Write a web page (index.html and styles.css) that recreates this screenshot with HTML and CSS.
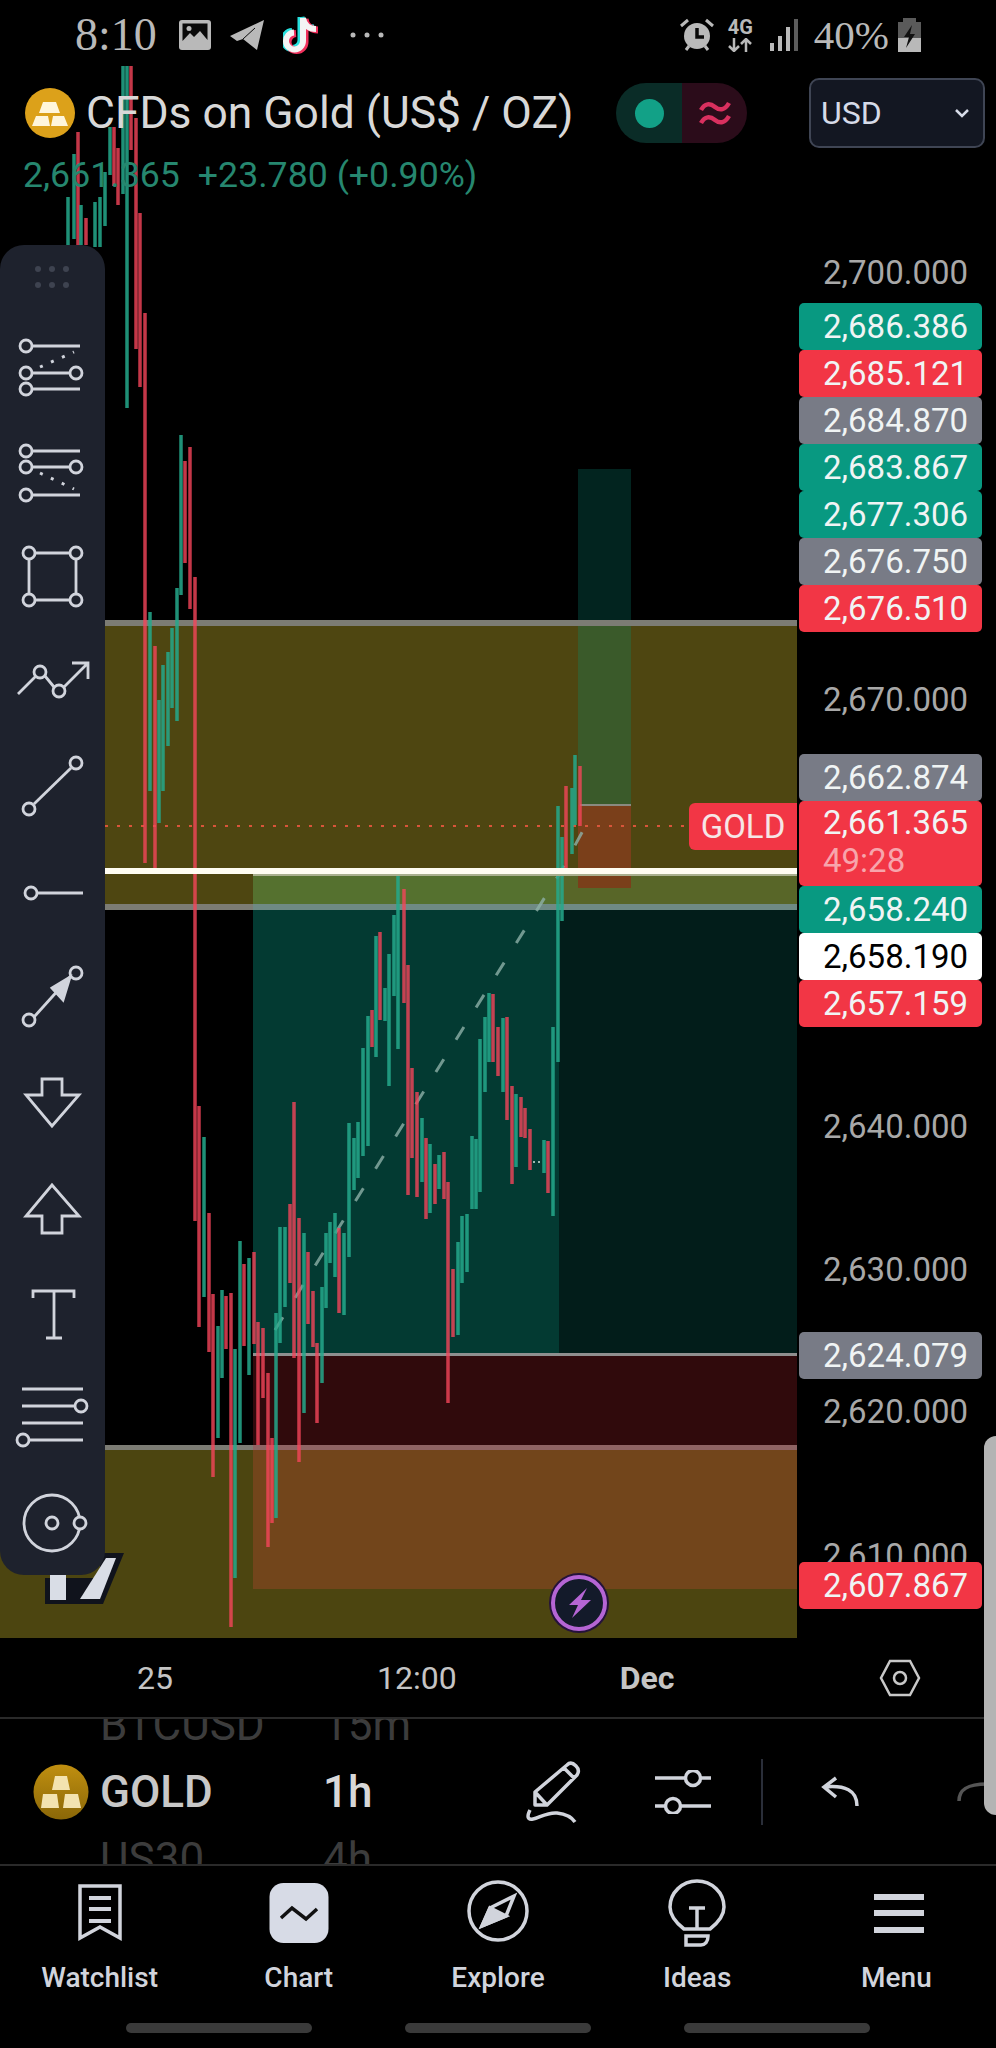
FILE: index.html
```html
<!DOCTYPE html>
<html lang="en">

<head>
    <meta charset="UTF-8">
    <meta name="viewport" content="width=device-width, initial-scale=1.0">
    <title>CFDs on Gold - Chart</title>
    <link rel="stylesheet" href="styles.css">
</head>

<body>
    <div class="screen">

        <section class="chart">
            <!-- plot: zones, drawings and candles, in page pixels -->
            <svg class="plot" width="996" height="1638" viewBox="0 0 996 1638">
                <rect x="0" y="621" width="797" height="288" fill="#4e4611"/>
                <rect x="0" y="1445" width="797" height="193" fill="#4c4510"/>

                <rect x="253" y="904" width="306" height="451" fill="#033a32"/>
                <rect x="559" y="904" width="238" height="451" fill="#021d1a"/>
                <rect x="253" y="874" width="306" height="30" fill="#55712f"/>
                <rect x="559" y="874" width="238" height="30" fill="#586628"/>
                <rect x="253" y="1356" width="544" height="90" fill="#300a0c"/>
                <rect x="253" y="1446" width="544" height="143" fill="#72451b"/>

                <rect x="578" y="469" width="53" height="152" fill="#02241f"/>
                <rect x="578" y="621" width="53" height="184" fill="#3a5a2a"/>
                <rect x="578" y="805" width="53" height="83" fill="#7a3f1a"/>
                <rect x="580" y="804" width="51" height="2" fill="#8a8a80"/>

                <rect x="105" y="620" width="692" height="6" fill="#7c7c74"/>
                <rect x="105" y="904" width="692" height="6" fill="#7c7c74"/>
                <rect x="253" y="904" width="544" height="6" fill="#6f8a84"/>
                <rect x="0" y="1445" width="797" height="5" fill="#7c7c74"/>
                <rect x="253" y="1445" width="544" height="5" fill="#8f6464"/>
                <rect x="253" y="1353" width="544" height="3" fill="#8f8f8f"/>

                <path class="entry-line" d="M105 826H689"/>
                <path class="trend-line" d="M275 1330L560 873L593 812"/>

                <path class="bear" d="M78 132V245M86 218V245M114 127V186M118 148V205M131 66V150M136 118V349M140 213V387M145 313V863M155 646V871M185 461V563M190 447V609M195 577V1221M199 1106V1327M209 1213V1352M213 1294V1477M226 1296V1349M231 1293V1627M244 1264V1346M254 1252V1344M258 1322V1445M263 1328V1398M268 1373V1547M272 1438V1523M290 1204V1283M294 1102V1358M299 1218V1462M308 1252V1324M313 1291V1347M317 1343V1423M339 1228V1313M372 1010V1047M380 932V1020M404 889V1003M408 965V1195M412 1068V1158M417 1092V1197M426 1138V1219M435 1164V1204M444 1152V1199M448 1182V1403M453 1269V1337M493 994V1062M498 1027V1076M507 1017V1120M512 1086V1184M521 1097V1137M525 1108V1138M530 1129V1170M548 1141V1193M566 786V868M580 766V826"/>
                <path class="bull" d="M68 197V245M74 154V239M81 205V245M95 202V247M100 197V247M105 172V226M110 127V175M123 66V194M127 66V408M150 612V791M159 700V823M163 665V791M168 652V746M172 628V708M177 588V721M181 435V595M204 1137V1297M218 1326V1438M222 1290V1378M235 1349V1578M240 1241V1443M249 1258V1375M276 1313V1518M280 1227V1343M285 1227V1307M304 1233V1413M322 1287V1383M326 1233V1308M330 1222V1263M335 1213V1277M344 1233V1315M349 1123V1257M354 1138V1190M358 1122V1178M363 1048V1156M368 1016V1146M376 936V1057M385 988V1021M389 954V1086M394 915V996M398 872V1049M422 1118V1182M430 1144V1213M439 1155V1189M458 1242V1335M462 1216V1283M467 1214V1272M472 1136V1209M476 1139V1209M480 1039V1192M485 1017V1092M489 993V1062M503 1018V1092M516 1094V1167M544 1140V1173M553 1027V1216M558 806V1062M562 837V921M572 788V854M575 755V825"/>
                <path class="tick-dots" d="M533 1162H542"/>

                <rect x="105" y="868" width="692" height="6" fill="#fffdf2"/>
                <rect x="253" y="874" width="544" height="2" fill="#a9b08e"/>

                <!-- tradingview mark, mostly behind the panel -->
                <path d="M28 1578H45V1604H103L124 1553H100V1578H28Z" fill="#10131c"/>
                <path d="M50 1573H66V1600H50Z" fill="#d9dde6"/>
                <path d="M106 1558H116L100 1599H80Z" fill="#d9dde6"/>
            </svg>

            <header class="top">
                <div class="status-bar">
                    <span class="clock">8:10</span>
                    <svg class="st-image" width="32" height="30" viewBox="0 0 32 30">
                        <rect width="32" height="30" rx="3" fill="#b9b9b9"/>
                        <path d="M3.500 3.500H28.500V20L21 11L15 17L11 13L3.500 21Z" fill="#0a0a0a"/>
                        <circle cx="10" cy="8.500" r="2.500" fill="#b9b9b9"/>
                    </svg>
                    <svg class="st-plane" width="36" height="32" viewBox="0 0 36 32">
                        <path d="M1 17L35 1L28 31L14 20L8 22Z" fill="#b9b9b9"/>
                        <path d="M14 20L26 9" stroke="#0a0a0a" stroke-width="1"/>
                    </svg>
                    <svg class="st-tiktok" width="36" height="40" viewBox="0 0 36 40" fill="none" stroke-width="7">
                        <path d="M20 3V26A8.500 8.500 0 1 1 11 17.500M20 3C21 10 26 14 33 14" stroke="#27e0de" transform="translate(-2 -1)"/>
                        <path d="M20 3V26A8.500 8.500 0 1 1 11 17.500M20 3C21 10 26 14 33 14" stroke="#f0305c" transform="translate(2 1)"/>
                        <path d="M20 3V26A8.500 8.500 0 1 1 11 17.500M20 3C21 10 26 14 33 14" stroke="#f4f4f4" stroke-width="6"/>
                    </svg>
                    <svg class="st-more" width="36" height="6" viewBox="0 0 36 6" fill="#b9b9b9">
                        <circle cx="3" cy="3" r="2.500"/>
                        <circle cx="17" cy="3" r="2.500"/>
                        <circle cx="31" cy="3" r="2.500"/>
                    </svg>

                    <svg class="st-alarm" width="34" height="34" viewBox="0 0 34 34">
                        <circle cx="17" cy="18" r="13" fill="#b9b9b9"/>
                        <path d="M17 10V19H24" fill="none" stroke="#0a0a0a" stroke-width="3.500"/>
                        <path d="M1 8L8 2M33 8L26 2M6 32L9 28M28 32L25 28" stroke="#b9b9b9" stroke-width="3"/>
                    </svg>
                    <span class="st-network">
                        <span class="st-4g">4G</span>
                        <svg width="24" height="14" viewBox="0 0 24 14" fill="none" stroke="#b9b9b9" stroke-width="2.500">
                            <path d="M6 0V13M1 8L6 13L11 8M18 14V1M13 6L18 1L23 6"/>
                        </svg>
                    </span>
                    <svg class="st-signal" width="28" height="32" viewBox="0 0 28 32" fill="#b9b9b9">
                        <rect x="0" y="24" width="4" height="8"/>
                        <rect x="8" y="17" width="4" height="15"/>
                        <rect x="16" y="8" width="4" height="24"/>
                        <rect x="24" y="0" width="4" height="32" fill="#5c5c5c"/>
                    </svg>
                    <span class="battery-text">40%</span>
                    <svg class="st-battery" width="23" height="34" viewBox="0 0 23 34">
                        <path d="M5 0H18V4H23V20H0V4H5Z" fill="#5a5a5a"/>
                        <path d="M0 20H23V34H0Z" fill="#b9b9b9"/>
                        <path d="M14 7L6 19H11L8 30L17 16H12Z" fill="#111"/>
                    </svg>
                </div>

                <div class="title-row">
                    <svg class="gold-logo" width="50" height="50" viewBox="0 0 50 50">
                        <circle cx="25" cy="25" r="25" fill="#dca11a"/>
                        <path d="M18 14H31L35 25H14ZM11 28H23L25 38H7ZM28 28H39L43 38H26Z" fill="#fff6dc"/>
                    </svg>
                    <h1 class="symbol-title">CFDs on Gold (US$ / OZ)</h1>
                    <div class="market-toggle">
                        <span class="toggle-open"><i class="open-dot"></i></span>
                        <span class="toggle-delay">
                            <svg width="32" height="28" viewBox="0 0 32 28" fill="none" stroke="#d9305f" stroke-width="4.500">
                                <path d="M2 11C6 4 11 4 16 8C21 12 26 11 30 4M2 24C6 17 11 17 16 21C21 25 26 24 30 17"/>
                            </svg>
                        </span>
                    </div>
                    <div class="currency">
                        <span>USD</span>
                        <svg width="14" height="9" viewBox="0 0 14 9" fill="none" stroke="#d6dbe8" stroke-width="2.500">
                            <path d="M1 1L7 7L13 1"/>
                        </svg>
                    </div>
                </div>

                <div class="quote-row">
                    <span>2,661.365</span>
                    <span>+23.780 (+0.90%)</span>
                </div>
            </header>

            <aside class="tools">
                <div class="grip"><i></i><i></i><i></i><i></i><i></i><i></i></div>

                <svg class="tool" viewBox="0 0 105 105">
                    <circle cx="26" cy="31" r="6"/><path d="M32 31H80"/>
                    <path class="dots" d="M40 52L74 37"/>
                    <circle cx="26" cy="58" r="6"/><circle cx="76" cy="58" r="6"/><path d="M32 58H70"/>
                    <circle cx="26" cy="74" r="6"/><path d="M32 74H80"/>
                </svg>
                <svg class="tool" viewBox="0 0 105 105">
                    <circle cx="26" cy="31" r="6"/><path d="M32 31H80"/>
                    <circle cx="26" cy="47" r="6"/><circle cx="76" cy="47" r="6"/><path d="M32 47H70"/>
                    <path class="dots" d="M40 53L74 69"/>
                    <circle cx="26" cy="75" r="6"/><path d="M32 75H80"/>
                </svg>
                <svg class="tool" viewBox="0 0 105 105">
                    <path d="M35 28H70M35 75H70M29 34V69M76 34V69"/>
                    <circle cx="29" cy="28" r="6"/><circle cx="76" cy="28" r="6"/>
                    <circle cx="29" cy="75" r="6"/><circle cx="76" cy="75" r="6"/>
                </svg>
                <svg class="tool" viewBox="0 0 105 105">
                    <path d="M18 64L36 46M45 46L54 57M64 57L88 33M72 33H88V49"/>
                    <circle cx="40" cy="42" r="6"/><circle cx="59" cy="61" r="6"/>
                </svg>
                <svg class="tool" viewBox="0 0 105 105">
                    <path d="M34 69L71 33"/>
                    <circle cx="76" cy="28" r="6"/><circle cx="29" cy="74" r="6"/>
                </svg>
                <svg class="tool" viewBox="0 0 105 105">
                    <circle cx="31" cy="53" r="6"/><path d="M37 53H83"/>
                </svg>
                <svg class="tool" viewBox="0 0 105 105">
                    <path d="M34 72L70 32"/>
                    <path class="solid" d="M52 43L70 32L63 55Z"/>
                    <circle cx="76" cy="28" r="6"/><circle cx="29" cy="75" r="6"/>
                </svg>
                <svg class="tool" viewBox="0 0 105 105">
                    <path d="M42 29H62V45H79L52 76L26 45H42Z"/>
                </svg>
                <svg class="tool" viewBox="0 0 105 105">
                    <path d="M52 30L79 61H62V78H42V61H26Z"/>
                </svg>
                <svg class="tool" viewBox="0 0 105 105">
                    <path d="M33 38V31H74V38M54 31V78M46 78H62"/>
                </svg>
                <svg class="tool" viewBox="0 0 105 105">
                    <path d="M22 24H83M22 41H75M22 58H83M29 75H83"/>
                    <circle cx="81" cy="41" r="6"/><circle cx="23" cy="75" r="6"/>
                </svg>
                <svg class="tool" viewBox="0 0 105 105">
                    <circle cx="52" cy="53" r="28"/>
                    <circle cx="52" cy="53" r="6"/>
                    <circle class="knob" cx="80" cy="53" r="6"/>
                </svg>
            </aside>

            <div class="scale">
                <span class="tick">2,700.000</span>
                <span class="tag green gap-7">2,686.386</span>
                <span class="tag red">2,685.121</span>
                <span class="tag grey">2,684.870</span>
                <span class="tag green">2,683.867</span>
                <span class="tag green">2,677.306</span>
                <span class="tag grey">2,676.750</span>
                <span class="tag red">2,676.510</span>
                <span class="tick gap-44">2,670.000</span>
                <span class="tag grey gap-31">2,662.874</span>
                <span class="tag red tall">2,661.365<small>49:28</small></span>
                <span class="tag green">2,658.240</span>
                <span class="tag white">2,658.190</span>
                <span class="tag red">2,657.159</span>
                <span class="tick gap-76">2,640.000</span>
                <span class="tick gap-96">2,630.000</span>
                <span class="tag grey gap-39">2,624.079</span>
                <span class="tick gap-9">2,620.000</span>
                <span class="tick gap-97">2,610.000</span>
                <span class="tag red overlap">2,607.867</span>
            </div>

            <span class="gold-flag">GOLD</span>

            <span class="bolt-btn">
                <svg width="60" height="60" viewBox="0 0 60 60">
                    <circle cx="30" cy="30" r="30" fill="#25123a"/>
                    <circle cx="30" cy="30" r="26" fill="#131a2a" stroke="#b565d4" stroke-width="4"/>
                    <path d="M38 15L20 32H29L23 45L42 27H32Z" fill="#b565d4"/>
                </svg>
            </span>
        </section>

        <div class="time-axis">
            <span class="t-25">25</span>
            <span class="t-noon">12:00</span>
            <span class="t-dec">Dec</span>
            <svg class="t-gear" width="42" height="38" viewBox="0 0 42 38" fill="none" stroke="#c8c8c8" stroke-width="2.500">
                <path d="M11 2H31L40 19L31 36H11L2 19Z"/>
                <circle cx="21" cy="19" r="6"/>
            </svg>
        </div>

        <div class="toolbar">
            <div class="symbols">
                <div class="symbol-row dim"><span></span><span>BTCUSD</span><span>15m</span></div>
                <div class="symbol-row">
                    <svg width="56" height="56" viewBox="0 0 56 56">
                        <defs>
                            <linearGradient id="goldFill" x1="0" y1="0" x2="0" y2="1">
                                <stop offset="0" stop-color="#c08f10"/>
                                <stop offset="1" stop-color="#8a6708"/>
                            </linearGradient>
                        </defs>
                        <circle cx="28" cy="28" r="27.500" fill="url(#goldFill)"/>
                        <path d="M22 12H34L37 26H19ZM10 30H24L26 44H8ZM32 30H45L48 44H30Z" fill="#f3e3b0"/>
                    </svg>
                    <span class="sym-name">GOLD</span>
                    <span class="sym-tf">1h</span>
                </div>
                <div class="symbol-row dim"><span></span><span>US30</span><span>4h</span></div>
            </div>

            <div class="actions">
                <svg class="a-pencil" width="60" height="64" viewBox="0 0 60 64" fill="none" stroke="#d1d4dc" stroke-width="3.500" stroke-linejoin="round">
                    <path d="M10 32L42 5C45 2 48 3 51 6C54 9 54 12 52 15L22 45H10ZM10 32L22 45M39 8L49 18"/>
                    <path d="M5 50C2 56 2 60 8 59C14 58 22 52 32 53C40 54 46 56 50 62"/>
                </svg>
                <svg class="a-sliders" width="56" height="44" viewBox="0 0 56 44" fill="none" stroke="#d1d4dc" stroke-width="3.500">
                    <path d="M0 8H30M46 8H56M0 36H10M26 36H56"/>
                    <circle cx="38" cy="8" r="7.500"/>
                    <circle cx="18" cy="36" r="7.500"/>
                </svg>
                <i class="a-rule"></i>
                <svg class="a-undo" width="40" height="32" viewBox="0 0 40 32" fill="none" stroke="#d1d4dc" stroke-width="3.500">
                    <path d="M15 2L3 11L15 21M3 11C24 9 36 14 36 30"/>
                </svg>
                <svg class="a-redo" width="39" height="22" viewBox="0 0 39 22" fill="none" stroke="#555" stroke-width="3.500">
                    <path d="M2 20C2 8 11 3 30 3"/>
                </svg>
            </div>
        </div>

        <nav class="tabs">
            <div class="tab-row">
                <a class="tab">
                    <svg width="72" height="72" viewBox="0 0 72 72" fill="none" stroke="#d1d4dc" stroke-width="3.500">
                        <path d="M16 7H56V59L36 48L16 59Z"/>
                        <path d="M25 19H47M25 30H47M25 42H47" stroke-width="4"/>
                    </svg>
                    <span>Watchlist</span>
                </a>
                <a class="tab">
                    <svg width="72" height="72" viewBox="0 0 72 72" fill="none">
                        <rect x="6.500" y="4" width="59" height="60" rx="14" fill="#d7dbe6"/>
                        <path d="M18 39L29 29L43 40L54 30" stroke="#111" stroke-width="3.500"/>
                    </svg>
                    <span>Chart</span>
                </a>
                <a class="tab">
                    <svg width="72" height="72" viewBox="0 0 72 72" fill="none" stroke="#d1d4dc" stroke-width="3.500">
                        <circle cx="36" cy="32" r="29"/>
                        <path d="M52 17L44 37L20 47L28 29Z"/>
                        <path d="M20 47L28 29L44 37Z" fill="#d1d4dc"/>
                    </svg>
                    <span>Explore</span>
                </a>
                <a class="tab">
                    <svg width="72" height="72" viewBox="0 0 72 72" fill="none" stroke="#d1d4dc" stroke-width="3.500">
                        <path d="M23 50C14 43 9 36 9 28A27 26 0 0 1 63 28C63 36 58 43 49 50Z"/>
                        <path d="M28 29H44M36 29V50M25 57H47C47 63 44 66 40 66H25Z"/>
                    </svg>
                    <span>Ideas</span>
                </a>
                <a class="tab">
                    <svg width="72" height="72" viewBox="0 0 72 72" fill="#d1d4dc">
                        <rect x="14" y="15" width="50" height="6"/>
                        <rect x="14" y="31" width="50" height="6"/>
                        <rect x="14" y="48" width="50" height="6"/>
                    </svg>
                    <span>Menu</span>
                </a>
            </div>
            <div class="home-bars"><i></i><i></i><i></i></div>
        </nav>

        <div class="edge-handle"></div>
    </div>
</body>

</html>
```

FILE: styles.css
```css
* {
    box-sizing: border-box;
}

body {
    margin: 0;
    background: #000;
    font-family: Roboto, "Liberation Sans", sans-serif;
}

.screen {
    position: relative;
    width: 996px;
    height: 2048px;
    overflow: hidden;
    background: #000;
    display: flex;
    flex-direction: column;
}

/* chart */

.chart {
    position: relative;
    height: 1638px;
    flex: none;
}

.plot {
    position: absolute;
    left: 0;
    top: 0;
}

.entry-line {
    fill: none;
    stroke: #d8553a;
    stroke-width: 2;
    stroke-dasharray: 3 9;
}

.trend-line {
    fill: none;
    stroke: #8db0a8;
    stroke-width: 3;
    stroke-dasharray: 15 23;
    stroke-opacity: 0.8;
}

.bear {
    fill: none;
    stroke: #f5455a;
    stroke-width: 3.500;
    stroke-opacity: 0.8;
}

.bull {
    fill: none;
    stroke: #24a98c;
    stroke-width: 3.500;
    stroke-opacity: 0.85;
}

.tick-dots {
    fill: none;
    stroke: #9db8b0;
    stroke-width: 2;
    stroke-dasharray: 2 3;
}

/* status bar and title */

.top {
    position: relative;
}

.status-bar {
    height: 70px;
    padding: 0 75px;
    display: flex;
    align-items: center;
    color: #b9b9b9;
}

.clock {
    font-family: "Liberation Serif", serif;
    font-size: 46px;
    line-height: 1;
}

.st-image { margin-left: 22px; }
.st-plane { margin-left: 18px; }
.st-tiktok { margin-left: 18px; }
.st-more { margin-left: 31px; }
.st-alarm { margin-left: auto; }

.st-network {
    margin-left: 14px;
    display: flex;
    flex-direction: column;
    align-items: center;
    gap: 1px;
}

.st-4g {
    font-size: 20px;
    font-weight: 700;
    line-height: 19px;
}

.st-signal { margin-left: 17px; }

.battery-text {
    margin-left: 16px;
    font-family: "Liberation Serif", serif;
    font-size: 41px;
    line-height: 1;
}

.st-battery { margin-left: 9px; }

.title-row {
    height: 70px;
    margin-top: 8px;
    padding: 0 11px 0 25px;
    display: flex;
    align-items: center;
}

.symbol-title {
    margin: 0 0 0 11px;
    font-size: 44.400px;
    font-weight: 400;
    color: #d8d8d8;
    white-space: nowrap;
}

.market-toggle {
    width: 131px;
    height: 60px;
    margin-left: 43px;
    border-radius: 30px;
    overflow: hidden;
    display: flex;
}

.market-toggle span {
    flex: 1;
    display: flex;
    align-items: center;
    justify-content: center;
}

.toggle-open {
    background: #0a2c27;
}

.toggle-delay {
    background: #2b0c1a;
}

.open-dot {
    width: 29px;
    height: 29px;
    border-radius: 50%;
    background: #12a187;
}

.currency {
    width: 176px;
    height: 70px;
    margin-left: auto;
    padding: 0 14px 0 10px;
    border: 2px solid #3f4554;
    border-radius: 10px;
    background: #131722;
    color: #d6dbe8;
    font-size: 32px;
    display: flex;
    align-items: center;
    justify-content: space-between;
}

.quote-row {
    margin-top: 7px;
    padding-left: 23px;
    display: flex;
    gap: 18px;
    font-size: 35.700px;
    line-height: 40px;
    color: #26876f;
}

/* drawing tools panel */

.tools {
    position: absolute;
    left: 0;
    top: 245px;
    width: 105px;
    height: 1330px;
    background: #1e222d;
    border-radius: 24px;
    display: flex;
    flex-direction: column;
}

.grip {
    height: 70px;
    padding: 21px 33px 0 35px;
    display: grid;
    grid-template-columns: repeat(3, 6px);
    grid-auto-rows: 6px;
    gap: 10px 8px;
}

.grip i {
    border-radius: 50%;
    background: #3e4350;
}

.tool {
    width: 105px;
    height: 105px;
    flex: none;
    fill: none;
    stroke: #d1d4dc;
    stroke-width: 2.800;
}

.tool .dots {
    stroke-dasharray: 3 9;
    stroke-width: 3;
}

.tool .solid {
    fill: #d1d4dc;
}

.tool .knob {
    fill: #1e222d;
}

/* price scale */

.scale {
    position: absolute;
    left: 799px;
    top: 249px;
    width: 183px;
    display: flex;
    flex-direction: column;
}

.tick,
.tag {
    height: 47px;
    padding-left: 24px;
    font-size: 33px;
    line-height: 47px;
    flex: none;
}

.tick {
    color: #a8a8a8;
}

.tag {
    border-radius: 5px;
    color: #f0f4f4;
}

.green { background: #089981; }
.red { background: #f23645; }
.grey { background: #787b86; }

.white {
    background: #fff;
    color: #000;
}

.tall {
    height: 85px;
    padding-top: 3px;
    line-height: 38px;
}

.tall small {
    display: block;
    font-size: 33px;
    color: #f7a5ac;
}

.gap-7 { margin-top: 7px; }
.gap-9 { margin-top: 9px; }
.gap-31 { margin-top: 31px; }
.gap-39 { margin-top: 39px; }
.gap-44 { margin-top: 44px; }
.gap-76 { margin-top: 76px; }
.gap-96 { margin-top: 96px; }
.gap-97 { margin-top: 97px; }
.overlap { margin-top: -17px; }

.gold-flag {
    position: absolute;
    left: 689px;
    top: 803px;
    width: 108px;
    height: 47px;
    border-radius: 6px 0 0 6px;
    background: #f23645;
    color: #f6e6e6;
    font-size: 33px;
    line-height: 47px;
    text-align: center;
}

.bolt-btn {
    position: absolute;
    left: 549px;
    top: 1573px;
    width: 60px;
    height: 60px;
}

/* time axis */

.time-axis {
    height: 81px;
    flex: none;
    padding-left: 137px;
    border-bottom: 2px solid #2a2a2a;
    display: flex;
    align-items: center;
    font-size: 32px;
    color: #c4c4c4;
}

.t-noon { margin-left: 204px; }

.t-dec {
    margin-left: 163px;
    font-weight: 700;
}

.t-gear { margin-left: 205px; }

/* symbol toolbar */

.toolbar {
    height: 147px;
    flex: none;
    border-bottom: 2px solid #2a2a2a;
    display: flex;
}

.symbols {
    width: 525px;
    height: 145px;
    overflow: hidden;
    flex: none;
    display: flex;
    flex-direction: column;
    justify-content: center;
}

.symbol-row {
    height: 67px;
    flex: none;
    padding-left: 33px;
    display: grid;
    grid-template-columns: 67px 223px auto;
    align-items: center;
    font-size: 44px;
    color: #3c3c3c;
}

.sym-name {
    font-weight: 500;
    color: #c8c8c8;
}

.sym-tf {
    font-weight: 500;
    color: #d8d8d8;
}

.actions {
    flex: 1;
    min-width: 0;
    overflow: hidden;
    display: flex;
    align-items: center;
}

.a-sliders {
    margin-left: 70px;
    flex: none;
}

.a-rule {
    width: 2px;
    height: 66px;
    margin-left: 50px;
    background: #2a2e39;
    flex: none;
}

.a-undo {
    margin-left: 58px;
    flex: none;
}

.a-redo {
    margin-left: 96px;
    flex: none;
}

.a-pencil {
    flex: none;
}

/* bottom nav */

.tabs {
    flex: 1;
    padding-top: 13px;
}

.tab-row {
    display: grid;
    grid-template-columns: repeat(5, 1fr);
}

.tab {
    display: flex;
    flex-direction: column;
    align-items: center;
    gap: 10px;
    font-size: 28px;
    font-weight: 500;
    line-height: 34px;
    color: #d1d4dc;
}

.home-bars {
    margin-top: 28px;
    display: flex;
    justify-content: center;
    gap: 93px;
}

.home-bars i {
    width: 186px;
    height: 10px;
    border-radius: 5px;
    background: #3a3a3a;
}

.edge-handle {
    position: absolute;
    right: 0;
    top: 1436px;
    width: 12px;
    height: 379px;
    background: #b4b4b4;
    border-radius: 12px 0 0 12px;
}
```
